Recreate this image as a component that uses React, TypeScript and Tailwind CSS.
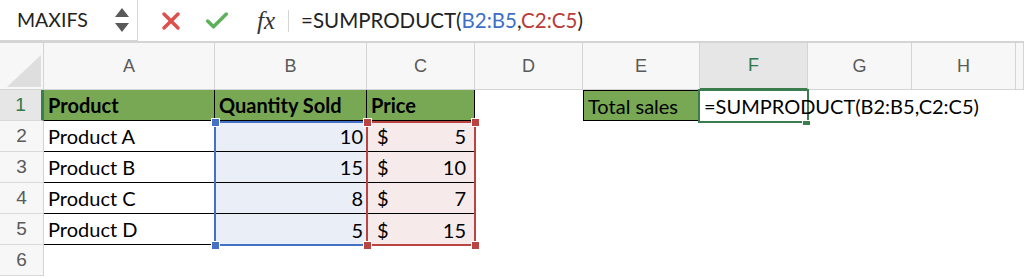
import { X, Check } from 'lucide-react';

const FONT = { fontFamily: 'Lato, "Open Sans", sans-serif' };
const UI_FONT = { fontFamily: '"Liberation Sans", Arial, sans-serif' };

const COLS = ['A', 'B', 'C', 'D', 'E', 'F', 'G', 'H', ''];

type CellDef = { text?: string; className?: string; dollar?: string };

const HEAD = 'bg-[#78a853] font-bold border-r border-b border-black';

const ROWS: CellDef[][] = [
  [
    { text: 'Product', className: `${HEAD} pl-1` },
    { text: 'Quantity Sold', className: `${HEAD} pl-1` },
    { text: 'Price', className: `${HEAD} pl-1` },
    {},
    { text: 'Total sales', className: 'bg-[#78a853] border border-black pl-1' },
    { text: '=SUMPRODUCT(B2:B5,C2:C5)', className: 'pl-1 z-10' },
    {},
    {},
    {},
  ],
  ...[
    ['Product A', '10', '5'],
    ['Product B', '15', '10'],
    ['Product C', '8', '7'],
    ['Product D', '5', '15'],
  ].map(([name, qty, price], i) => [
    { text: name, className: 'border-b border-black pl-1' },
    {
      text: qty,
      className: `bg-[#e9eef7] justify-end pr-1 ${i < 3 ? 'border-b border-black' : ''}`,
    },
    {
      dollar: price,
      className: `bg-[#f6eaea] ${i < 3 ? 'border-b border-black' : ''}`,
    },
    {},
    {},
    {},
    {},
    {},
    {},
  ]),
  [{}, {}, {}, {}, {}, {}, {}, {}, {}],
];

function Handle({ x, y, color }: { x: number; y: number; color: string }) {
  return (
    <div
      className="absolute h-[9px] w-[9px] border border-white"
      style={{ left: x - 4, top: y - 4, backgroundColor: color }}
    />
  );
}

function FormulaBar() {
  return (
    <div className="flex h-[43px] items-stretch border-b-2 border-[#d4d4d4] bg-white">
      <div className="flex w-[138px] items-center justify-between border-r border-b border-[#d6d6d6] pl-[17px] pr-[8px]">
        <span className="text-[19.5px] text-[#222]" style={FONT}>
          MAXIFS
        </span>
        <div className="flex flex-col items-center gap-[6px]">
          <svg width="14" height="9" viewBox="0 0 14 9">
            <path d="M7 0 L14 9 L0 9 Z" fill="#595959" />
          </svg>
          <svg width="14" height="9" viewBox="0 0 14 9">
            <path d="M0 0 L14 0 L7 9 Z" fill="#595959" />
          </svg>
        </div>
      </div>
      <div className="flex items-center pl-[19px]">
        <X size={28} strokeWidth={3} color="#df4f4b" />
        <Check size={28} strokeWidth={3} color="#5fb05a" className="ml-[18px]" />
        <span
          className="ml-[26px] text-[25px] italic text-[#333]"
          style={{ fontFamily: '"Liberation Serif", "DejaVu Serif", serif' }}
        >
          fx
        </span>
        <div className="ml-[13px] h-[22px] w-px bg-[#d4d4d4]" />
        <span className="ml-[12px] text-[20.5px] text-[#222]" style={FONT}>
          =SUMPRODUCT(<span className="text-[#3d6fc8]">B2:B5</span>,
          <span className="text-[#b83c38]">C2:C5</span>)
        </span>
      </div>
    </div>
  );
}

export default function App() {
  return (
    <div className="h-[279px] w-[1024px] overflow-hidden bg-white">
      <FormulaBar />
      <div className="relative">
        <div className="grid grid-cols-[44px_171px_152px_108px_108px_117px_108px_104px_104px_1fr] grid-rows-[47px_repeat(6,31px)]">
          {/* corner */}
          <div className="relative border-r border-b border-[#d4d4d4] bg-[#f7f7f7]">
            <svg className="absolute left-[7px] top-[12px]" width="34" height="32" viewBox="0 0 34 32">
              <path d="M34 0 L34 32 L0 32 Z" fill="#dedede" />
            </svg>
          </div>
          {COLS.map((c, i) => (
            <div
              key={`h${i}`}
              className={`flex items-center justify-center border-r border-b text-[18px] ${
                c === 'F'
                  ? 'border-b-2 border-r-[#d4d4d4] border-b-[#3c7d4f] bg-[#e6e6e6] text-[#2f7a48]'
                  : 'border-[#d4d4d4] bg-[#f7f7f7] text-[#5a5a5a]'
              }`}
              style={UI_FONT}
            >
              {c}
            </div>
          ))}
          {ROWS.map((row, r) => [
            <div
              key={`r${r}`}
              className={`flex items-center justify-center border-b border-[#d9d9d9] text-[19px] ${
                r === 0
                  ? 'border-r-[3px] border-r-[#3c7d4f] bg-[#e6e6e6] text-[#2f7a48]'
                  : 'border-r border-r-[#d4d4d4] bg-[#f7f7f7] text-[#5a5a5a]'
              }`}
              style={UI_FONT}
            >
              {r + 1}
            </div>,
            ...row.map((cell, c) => (
              <div
                key={`c${r}-${c}`}
                className={`relative flex items-center whitespace-nowrap text-[20px] text-black ${cell.className ?? ''}`}
                style={FONT}
              >
                {cell.dollar ? (
                  <div className="flex w-full justify-between pl-[10px] pr-[9px]">
                    <span>$</span>
                    <span>{cell.dollar}</span>
                  </div>
                ) : (
                  cell.text
                )}
              </div>
            )),
          ])}
        </div>

        {/* B2:B5 range */}
        <div className="absolute left-[214px] top-[78px] h-[125px] w-[154px] border-[2.5px] border-[#4471c4]" />
        {/* C2:C5 range */}
        <div className="absolute left-[366px] top-[78px] h-[125px] w-[110px] border-[2.5px] border-[#b94442]" />
        <Handle x={215} y={79} color="#4471c4" />
        <Handle x={215} y={202} color="#4471c4" />
        <Handle x={367} y={79} color="#b94442" />
        <Handle x={475} y={79} color="#b94442" />
        <Handle x={367} y={202} color="#b94442" />
        <Handle x={475} y={202} color="#b94442" />

        {/* F1 active cell */}
        <div className="absolute left-[698px] top-[46px] h-[34px] w-[111px] border-2 border-[#3c7d4f]" />
        <div className="absolute left-[802px] top-[77px] h-[6px] w-[9px] border border-white bg-[#3c7d4f]" />
      </div>
    </div>
  );
}
